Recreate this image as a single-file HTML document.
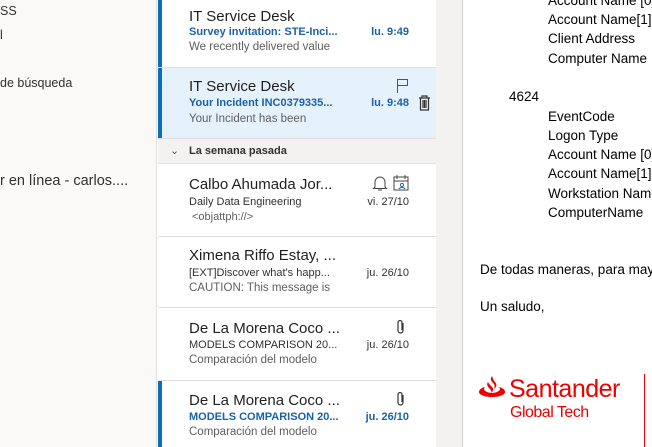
<!DOCTYPE html>
<html><head><meta charset="utf-8"><style>
*{margin:0;padding:0;box-sizing:border-box}
body{width:652px;height:447px;overflow:hidden;position:relative;background:#fff;font-family:"Liberation Sans",sans-serif;color:#201f1e}
.left{position:absolute;left:0;top:0;width:157px;height:447px;background:#faf9f8;border-right:1px solid #e1dfdd}
.left div{position:absolute;left:0;white-space:nowrap;font-size:12.5px;color:#323130}
.list{position:absolute;left:158px;top:0;width:278px;height:447px;background:#fff}
.gut{position:absolute;left:436px;top:0;width:27px;height:447px;background:#f3f2f1;border-right:1px solid #d2d0ce}
.row{position:absolute;left:0;width:278px;border-bottom:1px solid #e1dfdd}
.bar{position:absolute;left:0;top:0;bottom:0;width:4px;background:#0f6cbd}
.n{position:absolute;left:31px;font-size:15px;color:#201f1e;white-space:nowrap}
.s{position:absolute;left:31px;font-size:11px;white-space:nowrap;color:#323130}
.s.b{font-weight:bold;color:#1a62a8}
.p{position:absolute;left:31px;font-size:11.5px;color:#605e5c;white-space:nowrap}
.d{position:absolute;right:27px;font-size:11px;color:#323130;white-space:nowrap}
.d.b{font-weight:bold;color:#1a62a8}
.hdr{position:absolute;left:0;top:139px;width:278px;height:25px;background:#f3f2f1;border-bottom:1px solid #e1dfdd;font-size:11px;font-weight:bold;color:#323130}
.read{position:absolute;left:464px;top:0;width:188px;height:447px;background:#fff;font-size:13.5px;color:#000}
.read div{position:absolute;white-space:nowrap}
</style></head><body>
<div class="left">
<div style="top:4px">SS</div>
<div style="top:28px">l</div>
<div style="top:76px">de búsqueda</div>
<div style="top:173px;font-size:14.5px">r en línea - carlos....</div>
</div>
<div class="list">
<div class="row" style="top:0;height:68px;background:#fff"><div class="bar"></div>
<div class="n" style="top:8px">IT Service Desk</div>
<div class="s b" style="top:26px">Survey invitation: STE-Inci...</div>
<div class="d b" style="top:26px">lu. 9:49</div>
<div class="p" style="top:41px">We recently delivered value</div></div>
<div class="row" style="top:68px;height:71px;background:#e5f1fb"><div class="bar"></div>
<div class="n" style="top:10px">IT Service Desk</div>
<div class="s b" style="top:29px">Your Incident INC0379335...</div>
<div class="d b" style="top:29px">lu. 9:48</div>
<div class="p" style="top:45px">Your Incident has been</div>
<svg style="position:absolute;left:238px;top:10px" width="14" height="16" viewBox="0 0 14 16" fill="none" stroke="#555" stroke-width="1"><path d="M1.5 1v14M1.5 1.5h10v6h-10"/></svg>
<svg style="position:absolute;left:260px;top:27px" width="13" height="16" viewBox="0 0 13 16" fill="none" stroke="#333" stroke-width="1.2"><path d="M1 3h11M4 3V1h5v2M2.5 3v12h8V3M5 5v8M6.5 5v8M8 5v8"/></svg></div>
<div class="hdr"><span style="position:absolute;left:12px;top:5px;font-weight:normal;color:#555">&#8964;</span><span style="position:absolute;left:31px;top:6px">La semana pasada</span></div>
<div class="row" style="top:164px;height:73px">
<div class="n" style="top:12px">Calbo Ahumada Jor...</div>
<div class="s" style="top:32px">Daily Data Engineering</div>
<div class="d" style="top:32px">vi. 27/10</div>
<div class="p" style="top:47px;left:34px;font-size:11px">&lt;objattph://&gt;</div>
<svg style="position:absolute;left:214px;top:10px" width="16" height="18" viewBox="0 0 16 18" fill="none" stroke="#444" stroke-width="1"><path d="M3 13V8a5 5 0 0 1 10 0v5l1.5 1.5h-13zM6 16h4"/></svg>
<svg style="position:absolute;left:235px;top:10px" width="17" height="18" viewBox="0 0 17 18" fill="none" stroke="#444" stroke-width="1"><path d="M1 3h14v13H1zM1 7h14M4 1v4M12 1v4"/><circle cx="9" cy="11" r="1.6" stroke="#1a62a8"/><path d="M6 15c1-2 5-2 6 0" stroke="#1a62a8"/></svg></div>
<div class="row" style="top:237px;height:71px">
<div class="n" style="top:10px">Ximena Riffo Estay, ...</div>
<div class="s" style="top:30px">[EXT]Discover what's happ...</div>
<div class="d" style="top:30px">ju. 26/10</div>
<div class="p" style="top:45px">CAUTION: This message is</div></div>
<div class="row" style="top:308px;height:73px">
<div class="n" style="top:12px">De La Morena Coco ...</div>
<div class="s" style="top:31px">MODELS COMPARISON 20...</div>
<div class="d" style="top:31px">ju. 26/10</div>
<div class="p" style="top:46px">Comparación del modelo</div>
<svg style="position:absolute;left:238px;top:11px" width="10" height="16" viewBox="0 0 10 16" fill="none" stroke="#333" stroke-width="1.2"><path d="M7 4v7.5a2.5 2.5 0 0 1-5 0V3.5a2 2 0 0 1 4 0V11"/></svg></div>
<div class="row" style="top:381px;height:66px;border:none"><div class="bar"></div>
<div class="n" style="top:11px">De La Morena Coco ...</div>
<div class="s b" style="top:30px">MODELS COMPARISON 20...</div>
<div class="d b" style="top:30px">ju. 26/10</div>
<div class="p" style="top:45px">Comparación del modelo</div>
<svg style="position:absolute;left:238px;top:10px" width="10" height="16" viewBox="0 0 10 16" fill="none" stroke="#333" stroke-width="1.2"><path d="M7 4v7.5a2.5 2.5 0 0 1-5 0V3.5a2 2 0 0 1 4 0V11"/></svg></div>
</div>
<div class="gut"></div>
<div class="read">
<div style="left:84px;top:-7px">Account Name [0]</div>
<div style="left:84px;top:12px">Account Name[1]</div>
<div style="left:84px;top:31px">Client Address</div>
<div style="left:84px;top:51px">Computer Name</div>
<div style="left:45px;top:89px">4624</div>
<div style="left:84px;top:109px">EventCode</div>
<div style="left:84px;top:128px">Logon Type</div>
<div style="left:84px;top:147px">Account Name [0]</div>
<div style="left:84px;top:166px">Account Name[1]</div>
<div style="left:84px;top:186px">Workstation Name</div>
<div style="left:84px;top:205px">ComputerName</div>
<div style="left:16px;top:262px">De todas maneras, para mayor</div>
<div style="left:16px;top:299px">Un saludo,</div>
<svg style="position:absolute;left:15px;top:375px" width="26" height="26" viewBox="0 0 26 26" fill="#ec0000"><path d="M13 1c-2 3-1 5 1 7 2 2 2 4 1 6 3-2 3-5 1-7-2-2-2-4-3-6zM9 7c-2 3 0 5 2 7 1 1 2 3 1 4 2-1 3-4 1-6-2-2-3-3-4-5zM6 12C2 13 0 15 0 17c0 3 6 5 13 5s13-2 13-5c0-2-2-4-6-5 1 1 1 2 1 2 0 2-4 4-8 4s-8-2-8-4c0 0 0-1 1-2z"/></svg>
<div style="left:45px;top:375px;font-size:25px;color:#ec0000;letter-spacing:-0.5px">Santander</div>
<div style="left:46px;top:404px;font-size:16px;color:#ec0000;letter-spacing:-0.5px">Global Tech</div>
<div style="left:180px;top:374px;width:1px;height:73px;background:#ec0000"></div>
</div>
</body></html>
